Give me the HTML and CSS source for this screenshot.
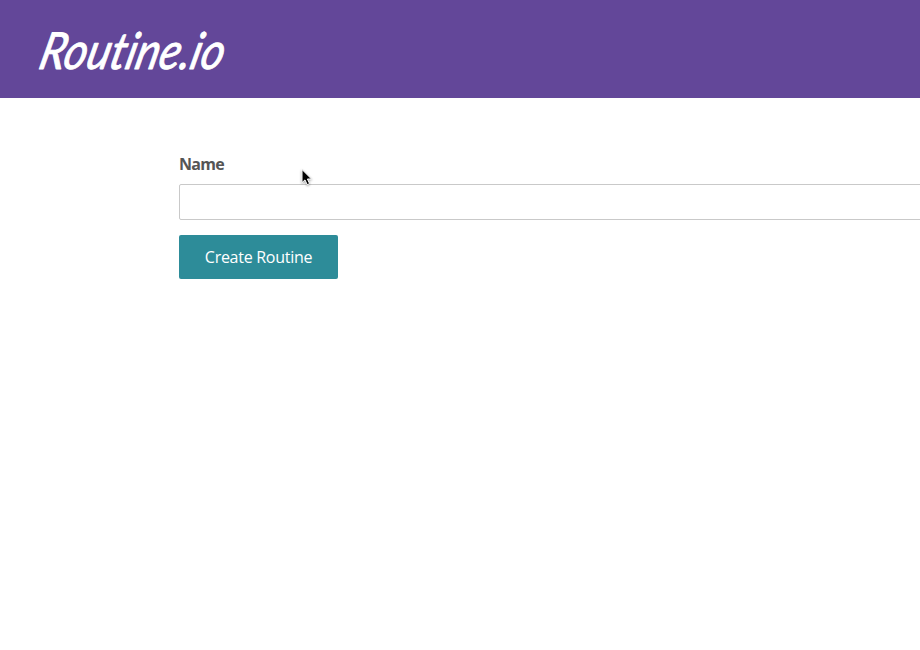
FILE: index.html
```html
<!DOCTYPE html>
<html lang="en">
<head>
<meta charset="utf-8">
<title>Routine.io</title>
<link rel="stylesheet" href="styles.css">
</head>
<body>
<header class="site-header">
  <svg class="logo" width="200" height="56" viewBox="0 0 200 56" role="img" aria-label="Routine.io">
    <text class="logo-text" transform="translate(7 47) skewX(-14)" x="0" y="0" textLength="184" lengthAdjust="spacingAndGlyphs">Routine.io</text>
  </svg>
</header>
<main class="content">
  <form class="routine-form">
    <label class="field-label" for="name">Name</label>
    <input class="field-input" id="name" type="text">
    <button class="submit" type="button">Create Routine</button>
  </form>
</main>
<svg class="pointer" width="14" height="20" viewBox="0 0 14 20" aria-hidden="true">
  <path d="M2 1.5V14.6L5 11.9L7.2 16.7L9.6 15.6L7.4 11H11.5Z" fill="#000" stroke="#fff" stroke-width="1"/>
</svg>
</body>
</html>
```
FILE: styles.css
```css
* {
  box-sizing: border-box;
}

body {
  margin: 0;
  height: 650px;
  overflow: hidden;
  background: #fff;
  color: #555;
  font-family: "Open Sans", sans-serif;
  font-size: 16px;
}

.site-header {
  display: flex;
  height: 98px;
  padding: 22px 30px;
  background: #634799;
}

.logo {
  display: block;
  flex: none;
  overflow: visible;
}

.logo-text {
  fill: #fff;
  stroke: #fff;
  stroke-width: 0.9px;
  stroke-linejoin: round;
  font-family: Lato, sans-serif;
  font-size: 51px;
  font-style: italic;
  font-weight: 400;
  font-variant-ligatures: none;
}

.content {
  padding: 53px 0 0 179px;
}

.routine-form {
  display: flex;
  flex-direction: column;
  align-items: flex-start;
  width: 762px;
}

.field-label {
  height: 26px;
  margin-bottom: 7px;
  font-size: 16px;
  font-weight: 700;
  letter-spacing: -0.75px;
  line-height: 26px;
}

.field-input {
  width: 100%;
  height: 36px;
  margin: 0 0 15px;
  padding: 6px 8px;
  border: 1px solid #c9c9c9;
  border-radius: 2px;
  background: #fff;
  font: inherit;
}

.submit {
  width: 159px;
  height: 44px;
  padding: 0;
  border: 0;
  border-radius: 2px;
  background: #2d8c99;
  color: #fff;
  font-family: inherit;
  font-size: 16px;
  letter-spacing: -0.28px;
  line-height: 44px;
}

.pointer {
  position: absolute;
  top: 168px;
  left: 300px;
  filter: drop-shadow(0 1px 1px rgba(0, 0, 0, 0.35));
}
```
